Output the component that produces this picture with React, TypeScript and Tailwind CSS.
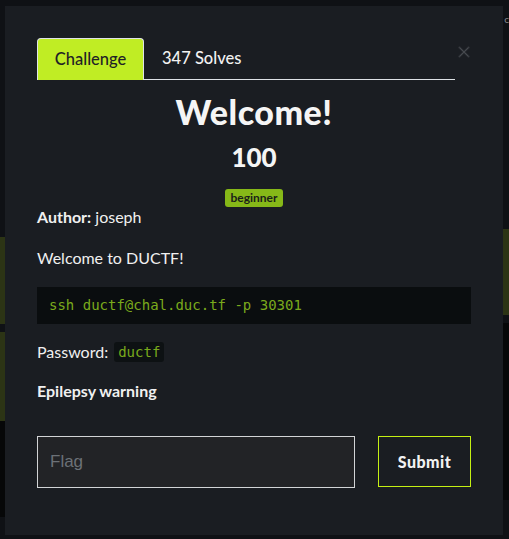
import React from "react";

export default function App() {
  return (
    <div className="relative w-[509px] h-[539px] overflow-hidden bg-[#0f1115]" style={{ fontFamily: "Lato, 'Noto Sans', sans-serif" }}>
      {/* background page */}
      <div className="flex justify-between h-full">
        <div className="w-[5px] flex flex-col">
          <div className="mt-[237px] h-[87px] bg-[#2c3415]" />
          <div className="mt-[8px] h-[89px] bg-[#2c3415]" />
          <div className="h-[96px] bg-[#060708]" />
        </div>
        <div className="w-[6px] flex flex-col">
          <div className="mt-[229px] h-[86px] bg-[#2c3415]" />
          <div className="mt-[8px] h-[177px] bg-[#060708]" />
        </div>
      </div>

      {/* modal */}
      <div className="absolute left-[5px] top-[6px] w-[498px] h-[529px] bg-[#1a1d22] px-[32px] pt-[32px]">
        <div className="flex items-end">
          <div className="flex flex-1 items-end border-b border-[#dee2e6] h-[42px] mr-[2px]">
            <div className="w-[107px] h-[42px] bg-[#c0ed24] rounded-t-[4px] border border-b-0 border-[#dee2e6] flex items-center justify-center text-[16.5px] text-[#1f2226] font-medium -mb-px">
              Challenge
            </div>
            <div className="h-[42px] flex items-center pl-[18px] text-[16.5px] text-[#f2f2f2] font-medium">
              347 Solves
            </div>
          </div>
          <div className="w-[14px] h-[42px] flex items-start pt-[8px] justify-center">
            <svg width="12" height="12" viewBox="0 0 12 12">
              <path d="M1.5 1.5 L10.5 10.5 M10.5 1.5 L1.5 10.5" stroke="#2f3237" strokeWidth="2.4" strokeLinecap="round" />
              <path d="M1.5 1.5 L10.5 10.5 M10.5 1.5 L1.5 10.5" stroke="#55595e" strokeWidth="0.6" />
            </svg>
          </div>
        </div>

        <div className="flex flex-col items-center">
          <div className="mt-[12px] text-[34px] leading-[40px] font-black text-[#f5f5f5] tracking-[0.5px]">Welcome!</div>
          <div className="mt-[10px] text-[26px] leading-[30px] font-black text-[#f5f5f5]">100</div>
          <div className="mt-[17px] h-[18px] px-[5px] rounded-[3px] bg-[#86b818] text-[12px] leading-[18px] font-bold text-[#1b1e18]">beginner</div>
        </div>

        <div className="-mt-[2px] text-[16px] leading-[24px] text-[#f0f0f0]">
          <span className="font-bold">Author:</span> joseph
        </div>
        <div className="mt-[17px] text-[16px] leading-[24px] text-[#f0f0f0]">Welcome to DUCTF!</div>
        <div className="mt-[17px] h-[37px] bg-[#0a0d0f] flex items-center px-[12px] text-[14px] text-[#7aaa1c]" style={{ fontFamily: "'DejaVu Sans Mono', monospace" }}>
          ssh ductf@chal.duc.tf -p 30301
        </div>
        <div className="mt-[16px] flex items-center text-[16px] leading-[24px] text-[#f0f0f0]">
          <span>Password:</span>
          <span className="ml-[6px] h-[20px] px-[4px] rounded-[3px] bg-[#0d1113] text-[14px] leading-[20px] text-[#7aaa1c]" style={{ fontFamily: "'DejaVu Sans Mono', monospace" }}>ductf</span>
        </div>
        <div className="mt-[15px] text-[16px] leading-[24px] font-bold text-[#f0f0f0]">Epilepsy warning</div>

        <div className="mt-[33px] flex justify-between">
          <div className="w-[318px] h-[52px] border border-[#d2d4d6] bg-[#222326] flex items-center px-[12px] text-[17px] text-[#6c7177]" style={{ fontFamily: "'Liberation Sans', Arial, sans-serif" }}>
            Flag
          </div>
          <div className="w-[93px] h-[51px] border border-[#c5f013] flex items-center justify-center text-[16px] font-black text-[#f2f2f2] tracking-[0.5px]">
            Submit
          </div>
        </div>
      </div>

      <div className="absolute right-[0px] top-[12px] text-[10px] text-[#8a8d91]">c</div>
    </div>
  );
}
